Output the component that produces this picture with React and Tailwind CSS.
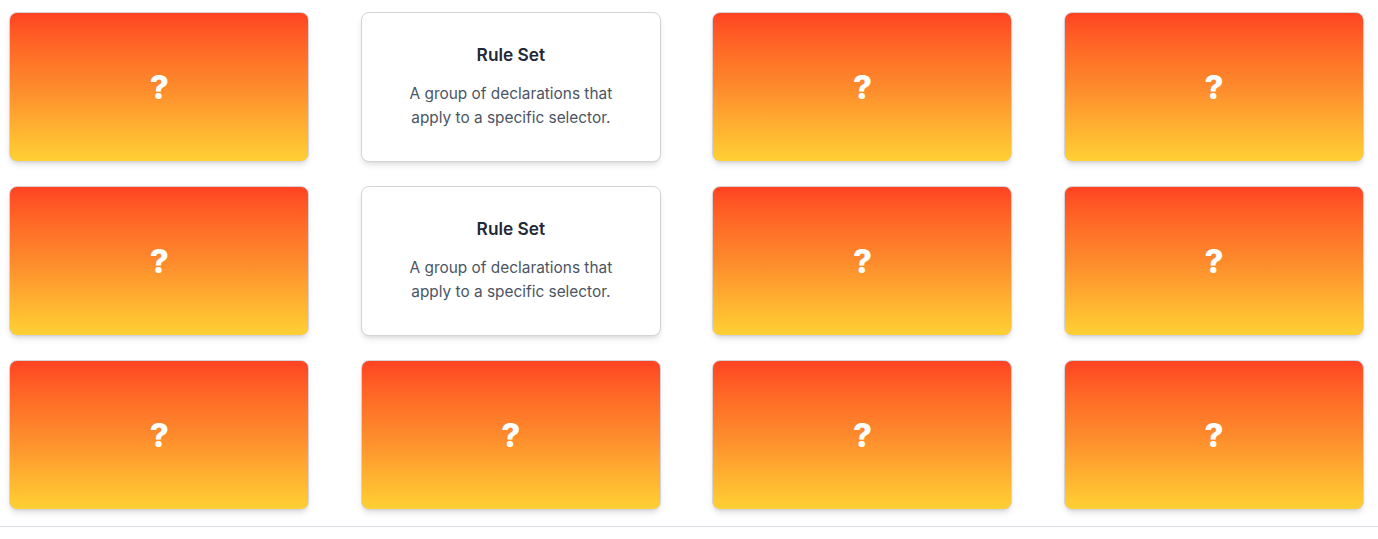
import React from "react";

const cards = [
  "q", "info", "q", "q",
  "q", "info", "q", "q",
  "q", "q", "q", "q",
];

function QCard() {
  return (
    <div className="h-[150px] rounded-lg border border-[#d4d4d8] shadow-md bg-gradient-to-b from-[#ff4222] via-[#fd8a2c] to-[#ffd034] flex items-center justify-center">
      <span className="text-white font-extrabold text-[33px] leading-none select-none" style={{ fontFamily: "Inter, 'Liberation Sans', sans-serif" }}>?</span>
    </div>
  );
}

function InfoCard() {
  return (
    <div className="h-[150px] rounded-lg border border-[#d4d4d8] shadow-md bg-white flex flex-col items-center justify-center px-6 pb-[3px] text-center">
      <div className="text-[17.3px] leading-7 font-semibold text-[#1f2937]">Rule Set</div>
      <p className="mt-[13px] text-[15.4px] leading-6 text-[#4b5563]">
        A group of declarations that
        <br />
        apply to a specific selector.
      </p>
    </div>
  );
}

export default function App() {
  return (
    <div className="bg-white min-h-screen" style={{ fontFamily: "Inter, 'Liberation Sans', sans-serif" }}>
      <div className="pl-[9.33px] pr-[14px] pt-[12px] pb-[16px] grid grid-cols-4 gap-x-[51.67px] gap-y-[24px]">
        {cards.map((c, i) => (c === "q" ? <QCard key={i} /> : <InfoCard key={i} />))}
      </div>
      <div className="border-t border-[#d9dde3] h-[12px]" />
    </div>
  );
}
